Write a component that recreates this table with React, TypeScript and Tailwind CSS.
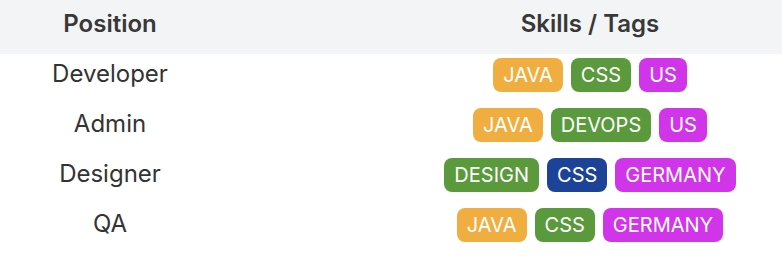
const tagColors: Record<string, string> = {
  JAVA: 'bg-[#f1ae40]',
  CSS: 'bg-[#5a9a3c]',
  DEVOPS: 'bg-[#5a9a3c]',
  DESIGN: 'bg-[#5a9a3c]',
  US: 'bg-[#d135e9]',
  GERMANY: 'bg-[#d135e9]',
};

const rows = [
  { position: 'Developer', tags: ['JAVA', 'CSS', 'US'] },
  { position: 'Admin', tags: ['JAVA', 'DEVOPS', 'US'] },
  { position: 'Designer', tags: ['DESIGN', 'CSS*', 'GERMANY'] },
  { position: 'QA', tags: ['JAVA', 'CSS', 'GERMANY'] },
];

export default function App() {
  return (
    <div className="w-[782px] h-[256px] bg-white text-[#333] font-['Inter',sans-serif] overflow-hidden">
      {/* Header */}
      <div className="grid grid-cols-[220px_1fr_384px] h-[54px] bg-[#f3f4f6] pt-2 text-2xl leading-8 font-semibold text-[#383838]">
        <div className="text-center">Position</div>
        <div />
        <div className="text-center">Skills / Tags</div>
      </div>

      {/* Rows */}
      {rows.map(row => (
        <div key={row.position} className="grid grid-cols-[220px_1fr_384px] h-[50px] pt-1">
          <div className="flex h-[34px] items-center justify-center text-2xl leading-8 -mt-[1px]">
            {row.position}
          </div>
          <div />
          <div className="flex h-[34px] items-center justify-center gap-2">
            {row.tags.map(tag => {
              const label = tag.replace('*', '');
              const color = tag === 'CSS*' ? 'bg-[#1c4397]' : tagColors[label];
              return (
                <span
                  key={tag}
                  className={`${color} text-white rounded-lg px-[10px] h-[34px] flex items-center text-[20px] leading-7`}
                >
                  {label}
                </span>
              );
            })}
          </div>
        </div>
      ))}
    </div>
  );
}
